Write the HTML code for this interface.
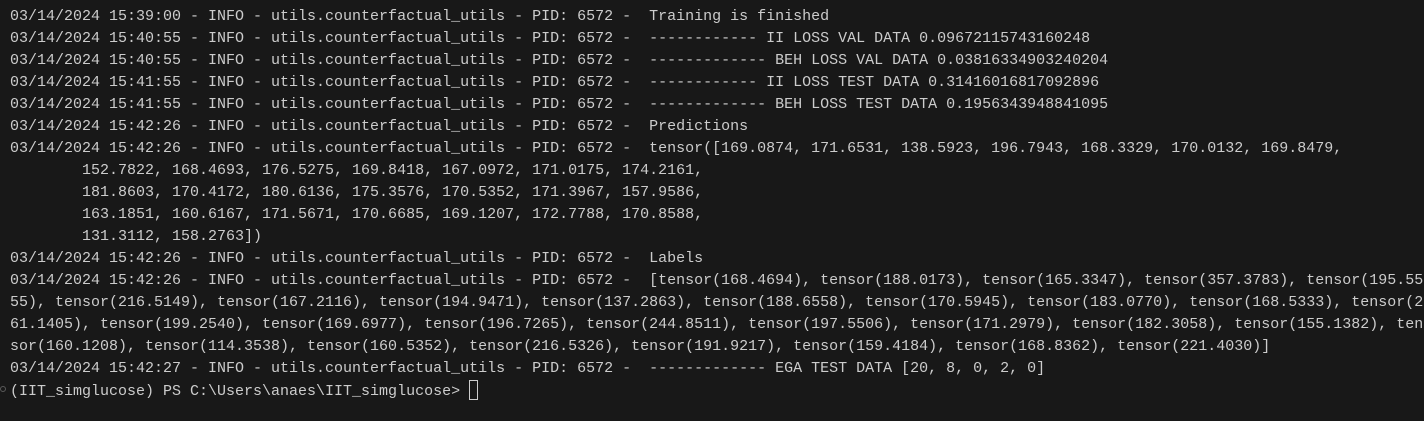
<!DOCTYPE html>
<html><head><meta charset="utf-8"><style>
html,body{margin:0;padding:0;background:#181818;width:1424px;height:421px;overflow:hidden}
pre{margin:0;position:absolute;left:10px;top:6px;font-family:"Liberation Mono",monospace;font-size:15px;line-height:22px;color:#cccccc;white-space:pre}
.cur{display:inline-block;width:9px;height:20px;border:1px solid #cccccc;vertical-align:-5px;box-sizing:border-box}
.dot{position:absolute;left:0px;top:386px;width:6px;height:6px;border-radius:50%;border:1px solid #5a5a5a;box-sizing:border-box}
</style></head><body>
<div class="dot"></div>
<pre>03/14/2024 15:39:00 - INFO - utils.counterfactual_utils - PID: 6572 -  Training is finished
03/14/2024 15:40:55 - INFO - utils.counterfactual_utils - PID: 6572 -  ------------ II LOSS VAL DATA 0.09672115743160248
03/14/2024 15:40:55 - INFO - utils.counterfactual_utils - PID: 6572 -  ------------- BEH LOSS VAL DATA 0.03816334903240204
03/14/2024 15:41:55 - INFO - utils.counterfactual_utils - PID: 6572 -  ------------ II LOSS TEST DATA 0.31416016817092896
03/14/2024 15:41:55 - INFO - utils.counterfactual_utils - PID: 6572 -  ------------- BEH LOSS TEST DATA 0.1956343948841095
03/14/2024 15:42:26 - INFO - utils.counterfactual_utils - PID: 6572 -  Predictions
03/14/2024 15:42:26 - INFO - utils.counterfactual_utils - PID: 6572 -  tensor([169.0874, 171.6531, 138.5923, 196.7943, 168.3329, 170.0132, 169.8479,
        152.7822, 168.4693, 176.5275, 169.8418, 167.0972, 171.0175, 174.2161,
        181.8603, 170.4172, 180.6136, 175.3576, 170.5352, 171.3967, 157.9586,
        163.1851, 160.6167, 171.5671, 170.6685, 169.1207, 172.7788, 170.8588,
        131.3112, 158.2763])
03/14/2024 15:42:26 - INFO - utils.counterfactual_utils - PID: 6572 -  Labels
03/14/2024 15:42:26 - INFO - utils.counterfactual_utils - PID: 6572 -  [tensor(168.4694), tensor(188.0173), tensor(165.3347), tensor(357.3783), tensor(195.55
55), tensor(216.5149), tensor(167.2116), tensor(194.9471), tensor(137.2863), tensor(188.6558), tensor(170.5945), tensor(183.0770), tensor(168.5333), tensor(2
61.1405), tensor(199.2540), tensor(169.6977), tensor(196.7265), tensor(244.8511), tensor(197.5506), tensor(171.2979), tensor(182.3058), tensor(155.1382), ten
sor(160.1208), tensor(114.3538), tensor(160.5352), tensor(216.5326), tensor(191.9217), tensor(159.4184), tensor(168.8362), tensor(221.4030)]
03/14/2024 15:42:27 - INFO - utils.counterfactual_utils - PID: 6572 -  ------------- EGA TEST DATA [20, 8, 0, 2, 0]
(IIT_simglucose) PS C:\Users\anaes\IIT_simglucose&gt; <span class="cur"></span></pre>
</body></html>
